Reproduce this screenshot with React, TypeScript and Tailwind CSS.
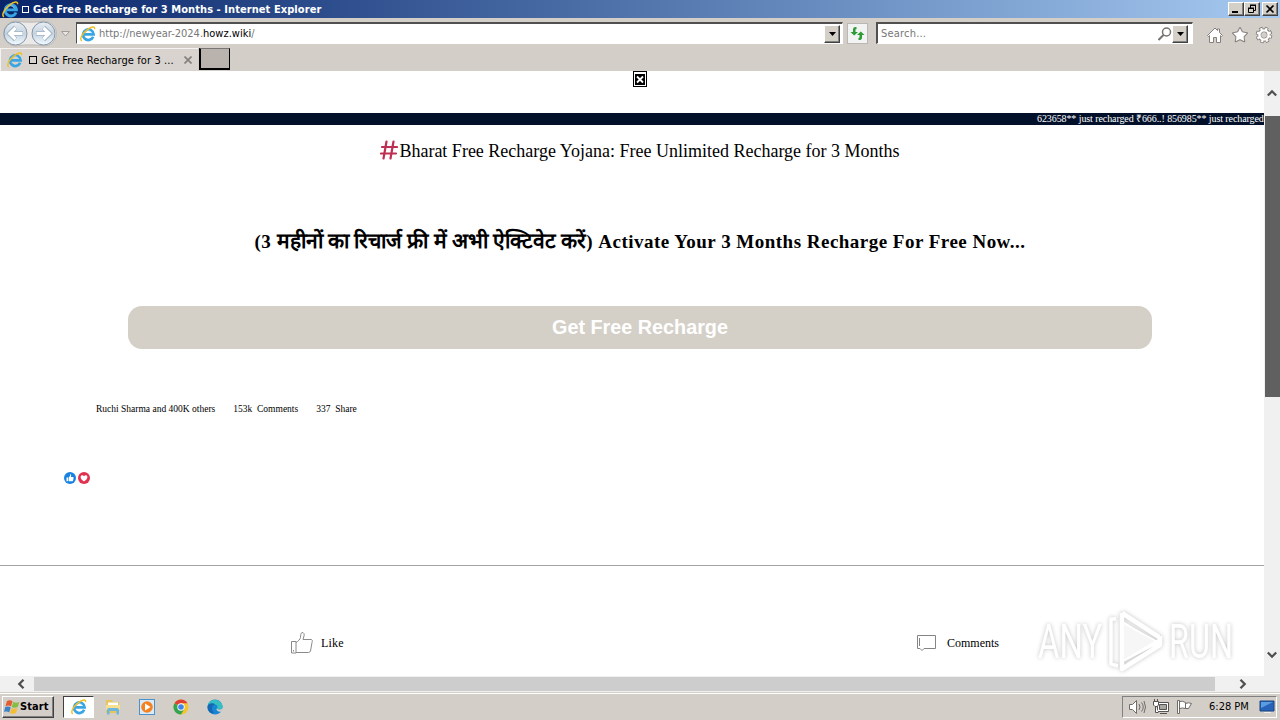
import type { ReactNode } from "react";
import { Star } from "lucide-react";
import { clsx } from "clsx";

type IconProps = { className?: string };

function IeLogo({ className }: IconProps) {
  return (
    <svg viewBox="0 0 16 16" fill="none" className={clsx("shrink-0", className)}>
      <path
        d="M13.2 10.8A5.3 5.3 0 1 1 13.6 8.4H4.2"
        stroke="#3aa5e3"
        strokeWidth="2.7"
      />
      <path d="M5 7.2A3.3 3.3 0 0 1 11.5 7.2" stroke="#a5dbfa" strokeWidth=".7" />
      <path
        d="M1.8 14.9C-.8 13.3 2.2 7.8 6.8 4.1c4.2-3.5 8.6-4.4 7.7-1"
        stroke="#f2bf22"
        strokeWidth="1.4"
      />
    </svg>
  );
}

function NavArrows() {
  return (
    <svg width="58" height="28" viewBox="0 0 58 28" fill="none" className="shrink-0">
      <defs>
        <linearGradient id="nav" x1="0" y1="0" x2="0" y2="1">
          <stop stopColor="#e9eef3" />
          <stop offset=".5" stopColor="#c5d3e0" />
          <stop offset="1" stopColor="#f3fbff" />
        </linearGradient>
      </defs>
      <path
        d="M15 2C22 3.5 36 3.5 43 2a12.5 12.5 0 0 1 0 25C36 25.5 22 25.5 15 27a12.5 12.5 0 0 1 0-25Z"
        fill="#eceae8"
        stroke="#bab7b4"
      />
      {[14.5, 42.5].map((x) => (
        <circle key={x} cx={x} cy="14.5" r="11.5" fill="url(#nav)" stroke="#8396a9" />
      ))}
      <g stroke="#9fb3c6" strokeWidth="4.6">
        <path d="M22 14.5H9M14.5 8.5l-6 6 6 6" />
        <path d="M35 14.5h13M42.5 8.5l6 6-6 6" />
      </g>
      <g stroke="#fff" strokeWidth="3.2">
        <path d="M21.5 14.5H9M14.5 8.8l-5.7 5.7 5.7 5.7" />
        <path d="M35.5 14.5h12.5M42.5 8.8l5.7 5.7-5.7 5.7" />
      </g>
    </svg>
  );
}

function DropButton() {
  return (
    <span className="flex h-[18px] w-4 shrink-0 items-center justify-center border border-t-white border-l-white border-r-[#404040] border-b-[#404040] bg-[#d4d0c8] shadow-[inset_-1px_-1px_#808080]">
      <svg width="7" height="4" viewBox="0 0 7 4">
        <path d="M0 0h7L3.5 4z" fill="#000" />
      </svg>
    </span>
  );
}

function WindowButton({ children, className }: { children: ReactNode; className?: string }) {
  return (
    <span
      className={clsx(
        "flex h-[14px] w-4 items-center justify-center border border-t-white border-l-white border-r-[#404040] border-b-[#404040] bg-[#d4d0c8] shadow-[inset_-1px_-1px_#808080]",
        className,
      )}
    >
      <svg width="10" height="10" viewBox="0 0 10 10" fill="none" stroke="#000">
        {children}
      </svg>
    </span>
  );
}

function TitleBar() {
  return (
    <header className="flex h-[18px] items-center bg-linear-to-r from-[#0a246a] to-[#a6caf0] pr-[2px] pl-[2px] text-white">
      <IeLogo className="size-[17px]" />
      <span className="ml-[3px] size-[7px] border border-white" />
      <span className="ml-[4px] pt-[2px] text-[11px] font-bold tracking-[0.07px] whitespace-nowrap [font-family:'DejaVu_Sans_Condensed','DejaVu_Sans',sans-serif] [font-stretch:condensed]">
        Get Free Recharge for 3 Months - Internet Explorer
      </span>
      <div className="ml-auto flex">
        <WindowButton>
          <path d="M1 8h6" strokeWidth="2" />
        </WindowButton>
        <WindowButton>
          <path d="M3 1h6M3 1.5h6M3.5 1v3M8.5 1v5.5H7" />
          <path d="M1 4h6M1 4.5h6M1.5 4v4.5h5V4" />
        </WindowButton>
        <WindowButton className="ml-[2px]">
          <path d="M1.5 1.5l7 7M8.5 1.5l-7 7" strokeWidth="1.7" />
        </WindowButton>
      </div>
    </header>
  );
}

function AddressRow() {
  return (
    <div className="flex h-[30px] items-center bg-[#d4cec9] pl-[1px] text-[11px] [font-family:'DejaVu_Sans_Condensed','DejaVu_Sans',sans-serif] [font-stretch:condensed]">
      <NavArrows />
      <svg width="9" height="6" viewBox="0 0 9 6" className="mt-px ml-[2px] shrink-0">
        <path d="M.5.5h8l-4 4.5z" fill="#e8e5e2" stroke="#a29d99" />
      </svg>
      <div className="ml-[6px] flex h-[22px] w-[767px] items-center border border-t-2 border-t-[#505050] border-l-[#505050] border-r-white border-b-white bg-white pr-[2px] pl-[3px]">
        <IeLogo className="size-4" />
        <span className="ml-[3px] pt-[2px] text-[#777]">
          http://newyear-2024.<span className="text-black">howz.wiki</span>/
        </span>
        <span className="ml-auto flex">
          <DropButton />
        </span>
      </div>
      <div className="ml-[4px] flex size-[21px] items-center justify-center border border-[#b9b6b3] bg-[#f1f4f2]">
        <svg width="15" height="15" viewBox="0 0 15 15" fill="#2c9b35">
          <path d="M6.5 1v2.200H5.500V6H8L4.200 9.500.5 6H3V3.500C3 1.500 4.500.8 6.500 1z" />
          <path d="M8.500 14v-2.200h1V9H7l3.800-3.500L14.500 9H12v2.500c0 2-1.500 2.700-3.500 2.500z" />
        </svg>
      </div>
      <div className="ml-[8px] flex h-[22px] w-[317px] items-center border border-t-2 border-t-[#505050] border-l-2 border-l-[#505050] border-r-white border-b-white bg-white pr-[4px] pl-[3px]">
        <span className="pt-[2px] tracking-[0.2px] text-[#777]">Search...</span>
        <svg width="14" height="14" viewBox="0 0 14 14" fill="none" stroke="#77736f" className="ml-auto">
          <circle cx="8.5" cy="5" r="4" strokeWidth="1.5" />
          <path d="M5.5 8l-5 5" strokeWidth="2" />
        </svg>
        <DropButton />
      </div>
      <div className="ml-[13px] flex items-center gap-[6.5px] pt-[3px]">
        <svg width="18" height="18" viewBox="0 0 18 18" fill="#fff" stroke="#85807c">
          <path d="M1.5 9.5L9 2l2.500 2.500V3h2v3.500l3 3-1 1-1-1v7h-4v-5h-3v5h-4v-7l-1 1z" />
        </svg>
        <Star size={18} fill="#fff" stroke="#85807c" strokeWidth={1.4} />
        <svg width="18" height="18" viewBox="0 0 18 18" fill="none">
          <circle cx="9" cy="9" r="6.5" stroke="#85807c" strokeWidth="3.6" strokeDasharray="3.1 2.005" />
          <circle cx="9" cy="9" r="4.7" stroke="#85807c" strokeWidth="4" />
          <circle cx="9" cy="9" r="6.3" stroke="#fff" strokeWidth="2.2" strokeDasharray="2.1 2.848" strokeDashoffset="-.5" />
          <circle cx="9" cy="9" r="4.6" stroke="#fff" strokeWidth="2.4" />
          <circle cx="9" cy="9" r="2.5" fill="#d4cec9" />
        </svg>
      </div>
    </div>
  );
}

function TabRow() {
  return (
    <div className="flex h-[23px] items-start bg-[#d4cec9] text-[11px] [font-family:'DejaVu_Sans_Condensed','DejaVu_Sans',sans-serif] [font-stretch:condensed]">
      <div className="flex h-[23px] w-[198px] items-center border-t border-l border-[#f5f3f1] bg-[#d8d3ce] pl-[6px]">
        <IeLogo className="size-4" />
        <span className="ml-[6px] size-2 border border-black" />
        <span className="ml-[4px] pt-[2px] tracking-[0.1px] whitespace-nowrap">Get Free Recharge for 3 ...</span>
        <svg width="8" height="8" viewBox="0 0 8 8" stroke="#85807c" strokeWidth="1.7" className="mr-[6px] ml-auto">
          <path d="M.5.5l7 7M7.5.5l-7 7" />
        </svg>
      </div>
      <div className="ml-px h-[22px] w-[31px] border border-b-2 border-l-2 border-t-[#777] border-r-black border-b-black border-l-black bg-[#bab2ad]" />
    </div>
  );
}

function LikeBadge() {
  return (
    <svg width="12" height="12" viewBox="0 0 12 12">
      <circle cx="6" cy="6" r="6" fill="#1683e0" />
      <path d="M2.5 5.5H4v3.800H2.500zM4.600 5.600L6 4V2.400c1.200-.3 1.400.8 1 2.500h2.300c.6.8 0 3.600-.7 4.400H4.600z" fill="#fff" />
    </svg>
  );
}

function LoveBadge() {
  return (
    <svg width="12" height="12" viewBox="0 0 12 12">
      <circle cx="6" cy="6" r="6" fill="#e2304f" />
      <path d="M6 9.500C3.500 8 2.600 6.500 2.600 5.100 2.600 3.200 5 2.700 6 4.300c1-1.600 3.400-1.100 3.400.8C9.400 6.500 8.500 8 6 9.500z" fill="#fff" />
    </svg>
  );
}

function Watermark() {
  return (
    <div className="absolute top-[537px] left-[1034px] flex h-[66px] w-[202px] items-center justify-between [font-family:Roboto,sans-serif] text-white drop-shadow-[0_0_2px_rgba(0,0,0,0.24)]">
      <span className="w-[66px] origin-left scale-x-[0.67] pl-[6px] text-[49px] leading-none">ANY</span>
      <svg width="60" height="64" viewBox="0 0 60 64" fill="none" stroke="#fff" strokeWidth="4.5" strokeLinejoin="round">
        <path d="M17 9v43M17 4L54 28M17 4v10l31 20M17 51L54 32M17 51v9L55 36V27" />
        <path d="M11 10H6v45l7 2" strokeWidth="3.5" />
        <path d="M18 14l33 18-33 20z" fill="#f6f6f6" strokeWidth="1.5" />
      </svg>
      <span className="w-[67px] origin-left scale-x-[0.66] text-[49px] leading-none">RUN</span>
    </div>
  );
}

function PageContent() {
  return (
    <main className="relative flex h-full w-[1280px] shrink-0 flex-col bg-white text-black [font-family:'Liberation_Serif',serif]">
      <div className="flex h-[42px] justify-center">
        <div className="flex h-4 w-[14px] items-center justify-center border border-black bg-white">
          <svg width="10" height="11" viewBox="0 0 10 11" className="bg-black" stroke="#fff" strokeWidth="1.8">
            <path d="M2 2.500l6 6M8 2.500l-6 6" />
          </svg>
        </div>
      </div>
      <div className="flex h-3 items-center bg-[#02102a] pl-[1037px] text-[10px] leading-3 tracking-[-0.09px] whitespace-nowrap text-white">
        623658** just recharged ₹666..! 856985** just recharged
      </div>
      <div className="mt-[13px] flex h-6 items-center justify-center">
        <svg width="18" height="20" viewBox="0 0 18 20" stroke="#be2f52" strokeWidth="2.2" strokeLinecap="round" className="shrink-0">
          <path d="M6.5 1.5l-3 17M13.5 1.5l-3 17M2 7h15M1 13.5h15" />
        </svg>
        <span className="pt-[2px] pl-px text-[18px] whitespace-nowrap">
          Bharat Free Recharge Yojana: Free Unlimited Recharge for 3 Months
        </span>
      </div>
      <h3 className="mt-[63px] h-8 text-center text-[19px] leading-8 font-bold tracking-[0.48px] whitespace-nowrap">
        (3 <span className="text-[21px] tracking-normal">महीनों का रिचार्ज फ्री में अभी ऐक्टिवेट करें</span>) Activate Your 3 Months Recharge For Free Now...
      </h3>
      <button className="mx-auto mt-[49px] h-[43px] w-[1024px] rounded-[14px] bg-[#d4d0c8] [font-family:'Liberation_Sans',sans-serif] text-[19.8px] font-bold text-white">
        Get Free Recharge
      </button>
      <div className="mt-[53px] ml-24 flex h-[14px] items-center text-[9.5px] whitespace-pre">
        <span>Ruchi Sharma and 400K others</span>
        <span className="ml-[18px]">153k{"  "}Comments</span>
        <span className="ml-[18px]">337{"  "}Share</span>
      </div>
      <div className="mt-14 ml-16 flex h-3 gap-[2px]">
        <LikeBadge />
        <LoveBadge />
      </div>
      <div className="mt-[81px] h-px bg-[#a5a5a5]" />
      <div className="mt-[64px] flex h-[26px] items-center text-[12px]">
        <svg width="22" height="22" viewBox="0 0 22 22" fill="none" stroke="#8a8a8a" className="ml-[291px]">
          <path d="M.5 9.500h4.500v11.500H.5zM2.500 18v1.500M5 10.500c2-1 4-3 4.500-5 .2-2 .2-4.500 1.500-5 2 0 2.500 1.500 2 3.500l-1 3.500H20.500c1 .5 1 1.500.5 3l-1.500 8.500q-.5 1.500-2 1.500H5" />
        </svg>
        <span className="ml-2 w-[588px] tracking-[0.2px]">Like</span>
        <svg width="20" height="17" viewBox="0 0 20 17" fill="none" stroke="#858585" className="ml-[8px]">
          <path d="M.5.5h18v13H7l-2 2-2-2H.5zM2.500 3v8" />
        </svg>
        <span className="ml-[10px]">Comments</span>
      </div>
      <Watermark />
    </main>
  );
}

function Chevron({ className }: IconProps) {
  return (
    <svg width="10" height="10" viewBox="0 0 10 10" fill="none" stroke="#505050" strokeWidth="2.3" className={className}>
      <path d="M.8 7.5L5 3.300l4.200 4.200" />
    </svg>
  );
}

function Taskbar() {
  return (
    <footer className="flex h-[28px] items-center border-t border-[#d4cec9] bg-[#d4cec9] text-[11px] shadow-[inset_0_1px_#fff] [font-family:'DejaVu_Sans_Condensed','DejaVu_Sans',sans-serif] [font-stretch:condensed]">
      <div className="ml-[2px] flex h-[22px] w-[52px] items-center border border-t-white border-l-white border-r-[#404040] border-b-[#404040] bg-[#d4cec9] pl-px shadow-[inset_-1px_-1px_#808080]">
        <svg width="16" height="16" viewBox="0 0 16 16" className="shrink-0">
          <path d="M3 2c2-1.300 4-1 5.500.2L7 7.500C5.500 6.300 3.500 6.300 1.500 7.200z" fill="#e35b2e" />
          <path d="M9.300 2.700c2 1.200 4 1.200 6 .2L13.800 8c-2 1-4 1-6-.1z" fill="#86bd43" />
          <path d="M1.200 8.100c2-1 4-.8 5.500.3L5.200 13.500C3.700 12.400 2 12.300 0 13z" fill="#3d81c6" />
          <path d="M7.500 9c2 1.100 4 1.100 6 .1L12 14c-2 1.100-4 1-6-.1z" fill="#f5bd36" />
        </svg>
        <span className="pt-[2px] text-[11px] font-bold tracking-[0.1px]">Start</span>
      </div>
      <div className="ml-[9px] flex h-[22px] w-[31px] items-center justify-center border border-t-[#404040] border-l-[#404040] border-r-white border-b-white bg-white">
        <IeLogo className="size-4" />
      </div>
      <div className="ml-[11px] flex items-center gap-[18px]">
        <svg width="16" height="16" viewBox="0 0 16 16">
          <path d="M1 1h6l1 2h6v11H1z" fill="#e8c55b" />
          <path d="M3 3.500h10v5H3z" fill="#fff" />
          <path d="M1 6h14v5H1z" fill="#f6df8f" />
          <path d="M2 15.500v-4.500q0-2 2-2h8q2 0 2 2v4.500h-2.500V12h-7v3.500z" fill="#6db7df" />
        </svg>
        <svg width="16" height="16" viewBox="0 0 16 16">
          <rect x=".5" y=".5" width="15" height="15" fill="#d9eaf8" stroke="#4c91ca" />
          <circle cx="8" cy="8" r="5.8" fill="#f58220" />
          <path d="M6 4.500v7L11.500 8z" fill="#fff" />
        </svg>
        <svg width="16" height="16" viewBox="0 0 16 16">
          <circle cx="8" cy="8" r="7.5" fill="#f6c52d" />
          <path d="M8 8L1.500 4.200A7.500 7.500 0 0 1 14.500 4.200H8z" fill="#df4033" />
          <path d="M1.500 4.200A7.500 7.500 0 0 0 8 15.500l3.300-5.600L8 8z" fill="#35a352" />
          <circle cx="8" cy="8" r="3.7" fill="#fff" />
          <circle cx="8" cy="8" r="2.8" fill="#4285e8" />
        </svg>
        <svg width="16" height="16" viewBox="0 0 16 16">
          <circle cx="8" cy="8" r="7.6" fill="#1787d4" />
          <path d="M1 6C2-.5 14-.9 15.500 6.700c.5 3.300-2.600 4.300-5.500 3 1.200-2.700-.2-4.500-3-4.500-2.500 0-5 1-6 .8z" fill="#35bfc0" />
          <path d="M1 6c2-2.500 6-2.200 7-.5C4.500 6.300 4 10.500 7 14 3 15.500-.5 11 1 6z" fill="#1668b4" />
          <path d="M9.500 9.600c2.500 1.700 5 .8 6.500-.6l-1.500 3.500c-2.500.8-5.500-.6-5-2.900z" fill="#d4cec9" />
        </svg>
      </div>
      <div className="mr-[3px] ml-auto flex h-[22px] w-[155px] items-center border border-t-[#808080] border-l-[#808080] border-r-white border-b-white pl-[6px]">
        <svg width="17" height="16" viewBox="0 0 17 16" fill="none" stroke="#6f6b68">
          <path d="M.5 5.500h3l4-4v13l-4-4h-3z" fill="#fff" />
          <path d="M10 5q2 3 0 6M12.500 3.500q3.500 4.500 0 9M15 2q3 6 0 12" />
        </svg>
        <svg width="16" height="16" viewBox="0 0 16 16" fill="#fff" stroke="#55524f" className="ml-[7px]">
          <path d="M4.500 3.500h11v9h-11z" />
          <path d="M6.500 5.500h7v5h-7z" fill="#aaa6a2" />
          <path d="M7 14.500h7M2.500 7v6.500h3M.5 2.500h5V6L4 7.500H2L.5 6zM1.500 0v2M4.500 0v2" />
        </svg>
        <svg width="16" height="16" viewBox="0 0 16 16" fill="#fff" stroke="#6f6b68" className="ml-[8px]">
          <path d="M.5 1.500h2v13h-2zM2.500 2.500q3-1 6 1v6q-3-1-6 0zM8.500 4.500q3-1.500 6 0l-3 5h-3z" />
        </svg>
        <span className="ml-[16px] pt-[2px] whitespace-nowrap">6:28 PM</span>
        <svg width="16" height="14" viewBox="0 0 16 14" className="mr-px ml-auto">
          <path d="M1 1h14v10H1z" fill="#2663b9" stroke="#174482" />
          <path d="M2 2h12L2 8z" fill="#5b9ce1" />
          <path d="M5 12h7v1H5z" fill="#eee" />
        </svg>
      </div>
    </footer>
  );
}

export default function App() {
  return (
    <div className="flex h-[720px] w-[1280px] flex-col overflow-hidden">
      <TitleBar />
      <AddressRow />
      <TabRow />
      <div className="flex h-[605px]">
        <div className="w-[1264px] overflow-hidden">
          <PageContent />
        </div>
        <div className="flex w-4 flex-col items-center bg-[#f0f0f0] pr-px">
          <Chevron className="mt-[17px]" />
          <div className="ml-[2px] mt-[18px] h-[281px] w-[15px] bg-[#606060]" />
          <Chevron className="mt-auto mb-[16px] rotate-180" />
        </div>
      </div>
      <div className="flex h-4 items-center bg-[#f0f0f0]">
        <Chevron className="ml-[16px] -rotate-90" />
        <div className="ml-[8px] h-[14px] w-[1181px] bg-[#cdcdcd]" />
        <Chevron className="ml-[23px] rotate-90" />
      </div>
      <Taskbar />
    </div>
  );
}
